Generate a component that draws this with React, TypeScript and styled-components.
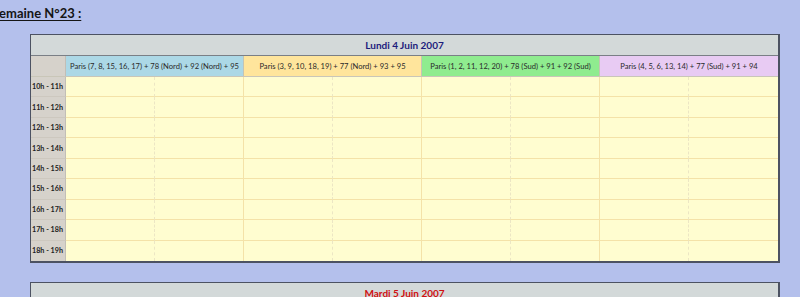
import React from 'react';
import styled, { createGlobalStyle } from 'styled-components';

const Global = createGlobalStyle`
  html, body { margin: 0; padding: 0; background: #b4c0ec; }
  body { font-family: "Lato", "Open Sans", "DejaVu Sans", sans-serif; }
  #root { width: 800px; height: 297px; overflow: hidden; }
`;

const Page = styled.div`
  width: 800px;
  height: 297px;
  overflow: hidden;
  background: #b4c0ec;
`;

const Heading = styled.h2`
  box-sizing: border-box;
  height: 34px;
  margin: 0 0 0 -8px;
  padding-top: 5px;
  font-family: "Lato", "Open Sans", sans-serif;
  font-weight: bold;
  font-size: 13px;
  line-height: 16px;
  color: #151515;
  text-decoration: underline;
  text-underline-offset: 2px;
`;

const DayTable = styled.div`
  box-sizing: border-box;
  margin: 0 0 19px 30px;
  width: 750px;
  border: 1px solid #4c5262;
  border-right-width: 2px;
  border-bottom-width: 2px;
`;

const TitleRow = styled.div<{ $color: string }>`
  box-sizing: border-box;
  height: 21px;
  background: #d3d9d9;
  border-bottom: 1px solid #7a7f86;
  display: flex;
  align-items: center;
  justify-content: center;
  font-weight: bold;
  font-size: 10px;
  color: ${(p) => p.$color};
`;

const HeaderRow = styled.div`
  display: grid;
  grid-template-columns: 35px repeat(4, 1fr);
  height: 21px;
  box-sizing: border-box;
  border-bottom: 1px solid #c9c6b8;
`;

const Corner = styled.div`
  background: #d6d2cb;
  border-right: 1px solid #c2beb6;
`;

const ZoneHead = styled.div<{ $bg: string }>`
  box-sizing: border-box;
  background: ${(p) => p.$bg};
  border-right: 1px solid #c4c4b4;
  display: flex;
  align-items: center;
  justify-content: center;
  font-size: 7.6px;
  color: #2a2a2a;
  white-space: nowrap;
  overflow: hidden;
  &:last-child { border-right: none; }
`;

const Body = styled.div`
  display: grid;
  grid-template-columns: 35px repeat(8, 1fr);
  grid-template-rows: repeat(9, 1fr);
  height: 184px;
`;

const TimeCell = styled.div<{ $last: boolean }>`
  box-sizing: border-box;
  background: #d6d2cb;
  border-right: 1px solid #c2beb6;
  border-bottom: ${(p) => (p.$last ? 'none' : '1px solid #cdc8bf')};
  display: flex;
  align-items: center;
  padding-left: 1px;
  font-weight: bold;
  font-size: 7.2px;
  color: #222;
  white-space: nowrap;
  overflow: hidden;
`;

const Slot = styled.div<{ $half: boolean; $last: boolean; $end: boolean }>`
  box-sizing: border-box;
  background: #fffdd0;
  border-bottom: ${(p) => (p.$last ? 'none' : '1px solid #f4e2a8')};
  border-right: ${(p) =>
    p.$end ? 'none' : p.$half ? '1px dashed #ece6c4' : '1px solid #f4e2a8'};
`;

const zones = [
  { bg: '#acd8e6', label: 'Paris (7, 8, 15, 16, 17) + 78 (Nord) + 92 (Nord) + 95' },
  { bg: '#ffe59c', label: 'Paris (3, 9, 10, 18, 19) + 77 (Nord) + 93 + 95' },
  { bg: '#8fec8f', label: 'Paris (1, 2, 11, 12, 20) + 78 (Sud) + 91 + 92 (Sud)' },
  { bg: '#e8cbf3', label: 'Paris (4, 5, 6, 13, 14) + 77 (Sud) + 91 + 94' },
];

const hours = [10, 11, 12, 13, 14, 15, 16, 17, 18];

function Day({ title, color }: { title: string; color: string }) {
  return (
    <DayTable>
      <TitleRow $color={color}>{title}</TitleRow>
      <HeaderRow>
        <Corner />
        {zones.map((z) => (
          <ZoneHead key={z.label} $bg={z.bg}>
            {z.label}
          </ZoneHead>
        ))}
      </HeaderRow>
      <Body>
        {hours.map((h, ri) => {
          const last = ri === hours.length - 1;
          return (
            <React.Fragment key={h}>
              <TimeCell $last={last}>
                {h}h - {h + 1}h
              </TimeCell>
              {Array.from({ length: 8 }).map((_, ci) => (
                <Slot key={ci} $half={ci % 2 === 0} $last={last} $end={ci === 7} />
              ))}
            </React.Fragment>
          );
        })}
      </Body>
    </DayTable>
  );
}

export default function App() {
  return (
    <Page>
      <Global />
      <Heading>Semaine N°23 :</Heading>
      <Day title="Lundi 4 Juin 2007" color="#1c1c7c" />
      <Day title="Mardi 5 Juin 2007" color="#d01010" />
    </Page>
  );
}
